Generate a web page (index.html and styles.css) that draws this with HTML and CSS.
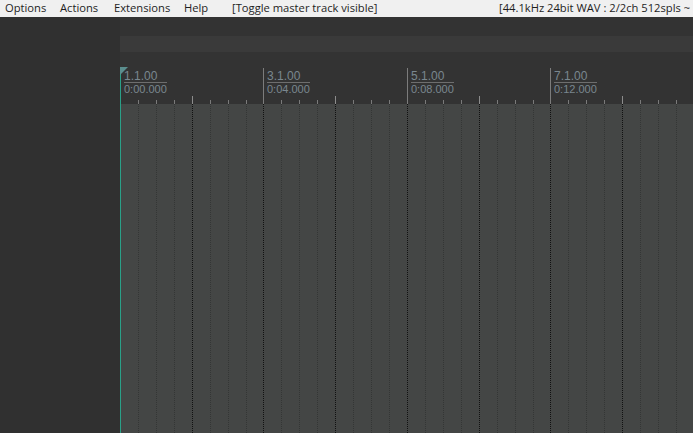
FILE: index.html
```html
<!DOCTYPE html>
<html>
<head>
<meta charset="utf-8">
<link rel="stylesheet" href="styles.css">
</head>
<body>
<div class="app">
  <div class="menubar">
    <span class="menu w-options">Options</span>
    <span class="menu w-actions">Actions</span>
    <span class="menu w-extensions">Extensions</span>
    <span class="menu w-help">Help</span>
    <span class="menu w-toggle">[Toggle master track visible]</span>
    <span class="status">[44.1kHz 24bit WAV : 2/2ch 512spls ~</span>
  </div>
  <div class="main">
    <div class="tcp"></div>
    <div class="arrange">
      <div class="topgap"></div>
      <div class="hbar"></div>
      <div class="ruler">
        <svg class="ruler-ticks" width="573" height="52" viewBox="0 0 573 52">
          <path class="major" d="M143.5 16V52M287.5 16V52M430.5 16V52"/>
          <path class="bartick" d="M72.5 44V52M215.5 44V52M359.5 44V52M502.5 44V52"/>
          <path class="beattick" d="M18.5 48V52M36.5 48V52M54.5 48V52M90.5 48V52M108.5 48V52M126.5 48V52M161.5 48V52M179.5 48V52M197.5 48V52M233.5 48V52M251.5 48V52M269.5 48V52M305.5 48V52M323.5 48V52M341.5 48V52M377.5 48V52M395.5 48V52M413.5 48V52M448.5 48V52M466.5 48V52M484.5 48V52M520.5 48V52M538.5 48V52M556.5 48V52"/>
        </svg>
        <div class="marker" style="left:0px"><div class="pos">1.1.00</div><div class="time">0:00.000</div></div>
        <div class="marker" style="left:143px"><div class="pos">3.1.00</div><div class="time">0:04.000</div></div>
        <div class="marker" style="left:287px"><div class="pos">5.1.00</div><div class="time">0:08.000</div></div>
        <div class="marker" style="left:430px"><div class="pos">7.1.00</div><div class="time">0:12.000</div></div>
      </div>
      <div class="tracks">
        <svg class="grid" width="573" height="329" viewBox="0 0 573 329">
          <path class="beatline" d="M18.5 0V329M36.5 0V329M54.5 0V329M90.5 0V329M108.5 0V329M126.5 0V329M161.5 0V329M179.5 0V329M197.5 0V329M233.5 0V329M251.5 0V329M269.5 0V329M305.5 0V329M323.5 0V329M341.5 0V329M377.5 0V329M395.5 0V329M413.5 0V329M448.5 0V329M466.5 0V329M484.5 0V329M520.5 0V329M538.5 0V329M556.5 0V329"/>
          <path class="barline" d="M72.5 0V329M143.5 0V329M215.5 0V329M287.5 0V329M359.5 0V329M430.5 0V329M502.5 0V329"/>
        </svg>
      </div>
      <div class="cursor"></div>
      <div class="cursor-flag"></div>
    </div>
  </div>
</div>
</body>
</html>
```
FILE: styles.css
```css
html, body {
  margin: 0;
  padding: 0;
  width: 693px;
  height: 433px;
  overflow: hidden;
  background: #333333;
}

.app {
  display: flex;
  flex-direction: column;
  width: 693px;
  height: 433px;
}

.menubar {
  display: flex;
  align-items: flex-start;
  height: 17px;
  padding-left: 5px;
  background: #f0f0f0;
  color: #1e1e1e;
  font-family: "Open Sans", "Noto Sans", sans-serif;
  font-size: 11.2px;
  line-height: 16px;
  white-space: nowrap;
  overflow: hidden;
  flex: none;
}

.menu { flex: none; }
.w-options { width: 55px; }
.w-actions { width: 54px; }
.w-extensions { width: 70px; }
.w-help { width: 48px; }
.w-toggle { width: 267px; }
.status { flex: 1; overflow: hidden; }

.main {
  display: flex;
  flex: 1;
  min-height: 0;
}

.tcp {
  width: 120px;
  flex: none;
  background: #303030;
}

.arrange {
  position: relative;
  flex: 1;
  display: flex;
  flex-direction: column;
  background: #333333;
}

.topgap { height: 19px; flex: none; }

.hbar {
  height: 16px;
  flex: none;
  background: #3a3a3a;
}

.ruler {
  position: relative;
  height: 52px;
  flex: none;
}

.ruler-ticks {
  display: block;
  shape-rendering: crispEdges;
}

.ruler-ticks path { fill: none; stroke-width: 1; }
.ruler-ticks .major { stroke: #7c7c7c; }
.ruler-ticks .bartick { stroke: #8c8c8c; }
.ruler-ticks .beattick { stroke: #7a7a7a; }

.marker {
  position: absolute;
  top: 18px;
  padding-left: 4px;
  font-family: "Liberation Sans", Arial, sans-serif;
  font-size: 11px;
  line-height: 12px;
  color: #7a878f;
}

.marker .pos {
  width: 43px;
  font-size: 12px;
  border-bottom: 1px solid #6e6e6e;
}

.tracks {
  flex: 1;
  background: #444645;
  overflow: hidden;
}

.grid {
  display: block;
  shape-rendering: crispEdges;
}

.grid path { fill: none; stroke-width: 1; stroke-dasharray: 1 1; }
.grid .beatline { stroke: #343635; }
.grid .barline { stroke: #111111; }

.cursor {
  position: absolute;
  left: 0;
  top: 50px;
  bottom: 0;
  width: 1px;
  background: #2aa088;
}

.cursor-flag {
  position: absolute;
  left: 0;
  top: 50px;
  width: 0;
  height: 0;
  border-top: 8px solid #5b8e8e;
  border-right: 8px solid transparent;
}
```
